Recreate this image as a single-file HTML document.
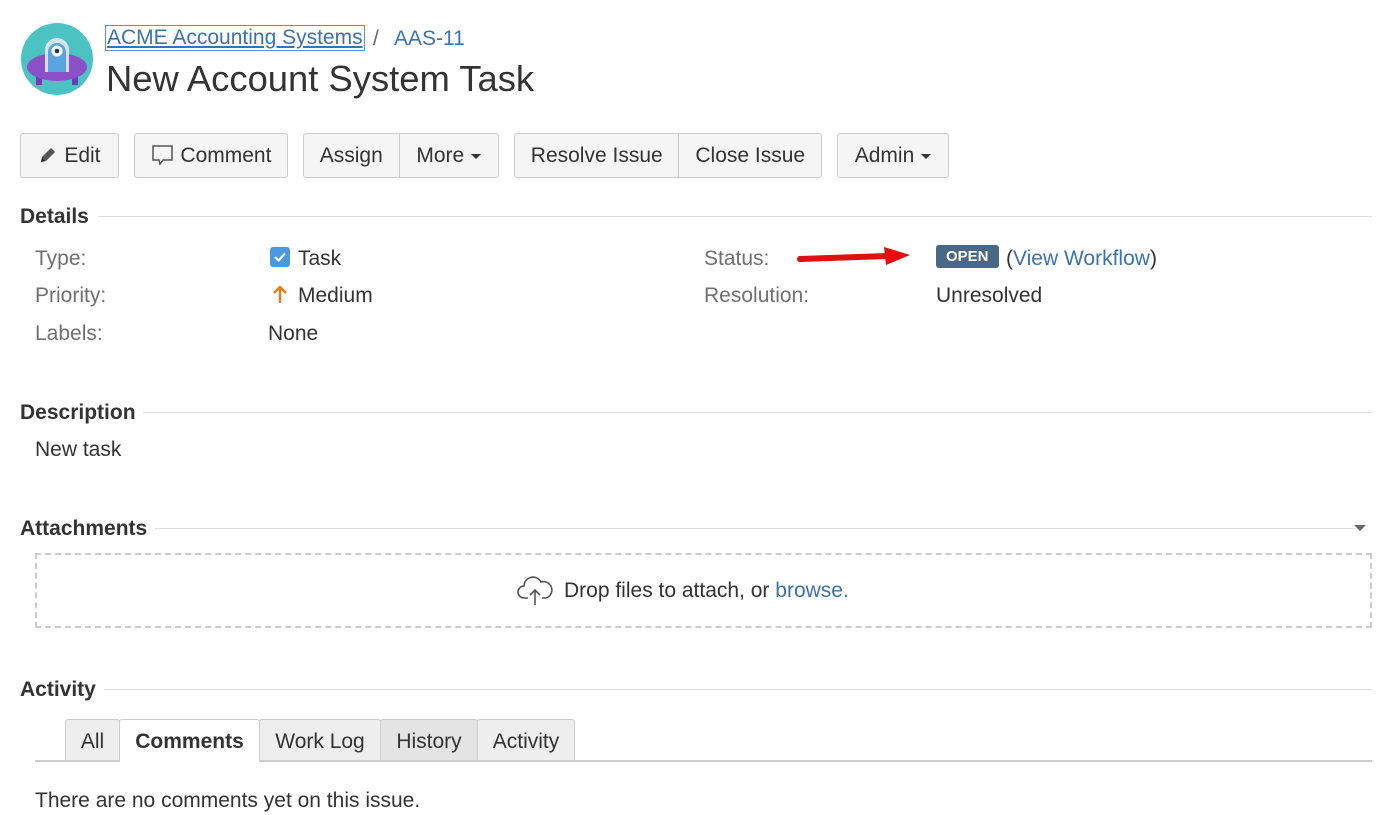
<!DOCTYPE html>
<html><head><meta charset="utf-8"><style>
body{margin:0;width:1400px;height:815px;background:#fff;font-family:"Liberation Sans",Arial,sans-serif;color:#333;position:relative;overflow:hidden}
.a{position:absolute;white-space:nowrap}
.lnk{color:#3b73af}
.btn{position:absolute;top:133px;height:45px;border:1px solid #ccc;border-radius:3px;background:#f5f5f5;font-size:21px;line-height:43px;color:#333;box-sizing:border-box;display:flex}
.btn span{display:block;text-align:center;height:43px;}
.sep{border-left:1px solid #ccc}
.caret{display:inline-block;width:0;height:0;border-left:5px solid transparent;border-right:5px solid transparent;border-top:5px solid #333;vertical-align:middle;margin-left:7px}
.h{position:absolute;left:20px;font-size:21px;font-weight:bold;color:#333}
.rule{position:absolute;height:1px;background:#ddd;right:28px}
.lbl{color:#707070;font-size:21px}
.val{font-size:21px;color:#333}
.tab{position:absolute;top:719px;height:41px;border:1px solid #ccc;border-bottom:none;background:#eee;font-size:21px;line-height:43px;text-align:center;box-sizing:border-box;border-radius:3px 3px 0 0}
</style></head><body>
<svg class="a" style="left:20px;top:22px" width="74" height="74" viewBox="0 0 74 74">
<circle cx="37" cy="37" r="36" fill="#4bc3c3"/>
<rect x="16" y="52" width="6" height="11" fill="#6a3db8"/><rect x="52" y="52" width="6" height="11" fill="#6a3db8"/>
<ellipse cx="37" cy="45" rx="30" ry="14" fill="#8b4fc8"/>
<path d="M25 50 V28 a12 12 0 0 1 24 0 V50 Z" fill="#e8e8f4" opacity="0.9"/>
<path d="M28 50 V30 a9 9 0 0 1 18 0 V50 Z" fill="#5aa5e0"/>
<circle cx="37" cy="29" r="5.5" fill="#fff"/><circle cx="37" cy="29" r="2.3" fill="#253858"/>
</svg>
<div class="a lnk" style="left:106px;top:26px;font-size:21px;outline:1px solid #5b8ce6;padding:0 1px;text-decoration:underline">ACME Accounting Systems</div>
<div class="a" style="left:373px;top:27px;font-size:21px;color:#666">/</div>
<div class="a lnk" style="left:394px;top:27px;font-size:21px">AAS-11</div>
<div class="a" style="left:106px;top:58px;font-size:36.4px;color:#333">New Account System Task</div>

<div class="btn" style="left:20px;width:99px"><span style="width:97px"><svg width="20" height="18" viewBox="0 0 20 18" style="vertical-align:-2px"><path d="M3 16 L4 11 L13 2 L17 6 L8 15 Z" fill="#555"/><path d="M3 16 L4 12 L7 15 Z" fill="#222"/></svg> Edit</span></div>
<div class="btn" style="left:134px;width:154px"><span style="width:152px"><svg width="24" height="24" viewBox="0 0 24 24" style="vertical-align:-5px"><path d="M2 3 H21 V17 H12 L9 21 L8 17 H2 Z" fill="none" stroke="#555" stroke-width="1.5"/></svg> Comment</span></div>
<div class="btn" style="left:303px;width:196px"><span style="width:95px">Assign</span><span class="sep" style="width:99px">More<i class="caret"></i></span></div>
<div class="btn" style="left:514px;width:308px"><span style="width:164px">Resolve Issue</span><span class="sep" style="width:142px">Close Issue</span></div>
<div class="btn" style="left:837px;width:112px"><span style="width:110px">Admin<i class="caret"></i></span></div>

<div class="h" style="top:205px">Details</div><div class="rule" style="left:98px;top:216px"></div>
<div class="a lbl" style="left:35px;top:247px">Type:</div>
<div class="a lbl" style="left:35px;top:284px">Priority:</div>
<div class="a lbl" style="left:35px;top:322px">Labels:</div>
<div class="a" style="left:270px;top:247px;width:20px;height:20px;background:#4a9ae1;border-radius:3px"><svg width="20" height="20"><path d="M5 10 L8.5 13.5 L15 6.5" stroke="#fff" stroke-width="2.2" fill="none"/></svg></div>
<div class="a val" style="left:298px;top:247px">Task</div>
<svg class="a" style="left:271px;top:284px" width="18" height="20"><path d="M9 19 V3 M3 9 L9 3 L15 9" stroke="#f07a1f" stroke-width="2.4" fill="none"/></svg>
<div class="a val" style="left:298px;top:284px">Medium</div>
<div class="a val" style="left:268px;top:322px">None</div>
<div class="a lbl" style="left:704px;top:247px">Status:</div>
<div class="a lbl" style="left:704px;top:284px">Resolution:</div>
<svg class="a" style="left:796px;top:244px" width="118" height="26"><path d="M4 15 L92 12" stroke="#e01010" stroke-width="6" stroke-linecap="round"/><path d="M88 3 L114 11 L90 21 Z" fill="#e01010"/></svg>
<div class="a" style="left:936px;top:245px;background:#4a6785;color:#fff;font-weight:bold;font-size:15px;padding:2px 10px;border-radius:3px;line-height:19px">OPEN</div>
<div class="a val" style="left:1006px;top:247px">(<span class="lnk">View Workflow</span>)</div>
<div class="a val" style="left:936px;top:284px">Unresolved</div>

<div class="h" style="top:401px">Description</div><div class="rule" style="left:143px;top:412px"></div>
<div class="a val" style="left:35px;top:438px">New task</div>

<div class="h" style="top:517px">Attachments</div><div class="rule" style="left:155px;top:528px;right:45px"></div>
<div class="a" style="left:1354px;top:525px;border-left:6px solid transparent;border-right:6px solid transparent;border-top:6px solid #666"></div>
<div class="a" style="left:35px;top:553px;width:1337px;height:75px;border:2px dashed #ccc;box-sizing:border-box"></div>
<svg class="a" style="left:516px;top:574px" width="38" height="32" viewBox="0 0 38 32"><path d="M12 24 H8 A6 6 0 0 1 8 12 A9 9 0 0 1 25 8 A7 7 0 0 1 30 24 H26" fill="none" stroke="#555" stroke-width="1.6"/><path d="M19 31 V16 M14 21 L19 16 L24 21" fill="none" stroke="#555" stroke-width="1.6"/></svg>
<div class="a val" style="left:564px;top:579px">Drop files to attach, or <span class="lnk">browse.</span></div>

<div class="h" style="top:678px">Activity</div><div class="rule" style="left:104px;top:689px"></div>
<div class="a" style="left:35px;top:760px;width:1337px;height:2px;background:#ccc"></div>
<div class="tab" style="left:65px;width:55px">All</div>
<div class="tab" style="left:119px;width:141px;background:#fff;font-weight:bold;height:43px">Comments</div>
<div class="tab" style="left:259px;width:122px">Work Log</div>
<div class="tab" style="left:380px;width:98px;background:#e4e4e4">History</div>
<div class="tab" style="left:477px;width:98px">Activity</div>
<div class="a val" style="left:35px;top:789px">There are no comments yet on this issue.</div>
</body></html>
